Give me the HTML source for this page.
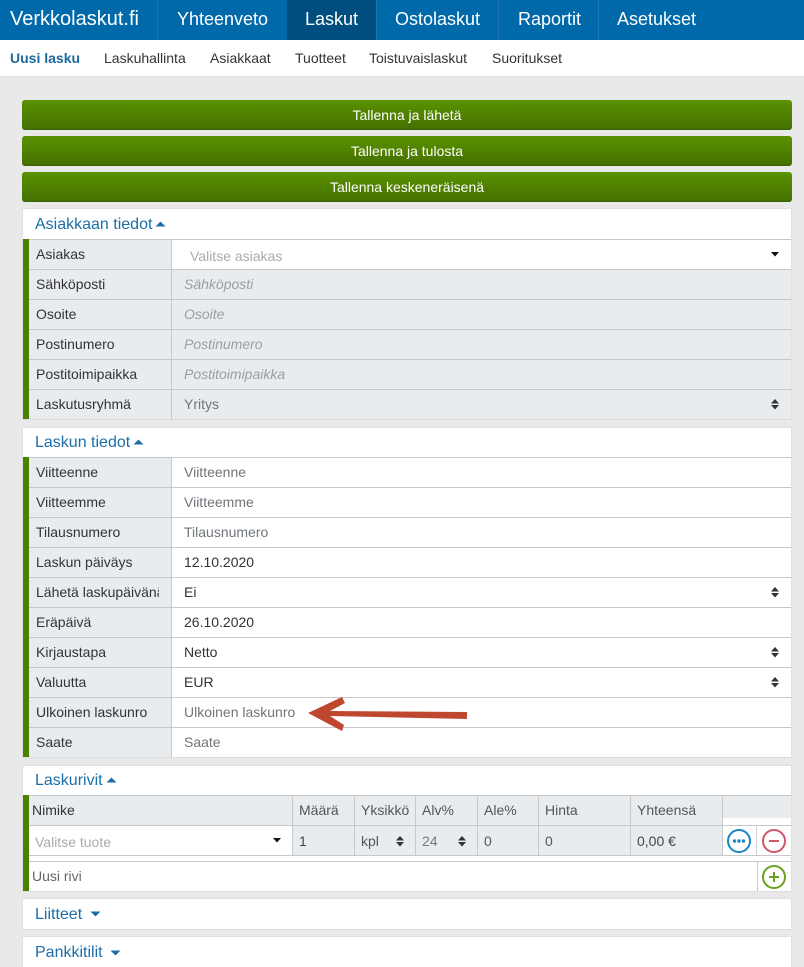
<!DOCTYPE html>
<html lang="fi"><head><meta charset="utf-8"><title>Verkkolaskut.fi</title>
<style>
html,body{margin:0;padding:0;width:804px;height:967px;overflow:hidden}
body{background:#e9e9e9;position:relative;font-family:"Liberation Sans",sans-serif;font-size:14px;color:#333}
div,span,a{position:absolute;box-sizing:border-box;white-space:nowrap}
.nav{left:0;top:0;width:804px;height:40px;background:#0069aa}
.sep{top:0;width:1px;height:40px;background:#1c76b0}
.n{top:8px;font-size:18px;line-height:22px;color:#fff}
.s{top:50px;line-height:16px;font-size:14px;color:#333}
.btn{left:22px;width:770px;height:30px;border-radius:3px;background:linear-gradient(#5a9200,#4f8000 55%,#457000);border-bottom:1px solid #3c6200;color:#fff;text-align:center;line-height:31px;font-size:14px}
.panel{left:22px;width:770px;background:#fff;border:1px solid #e0e0e0;border-bottom-color:#dcdcdc}
.h{left:35px;font-size:16px;line-height:20px;color:#1b6ea8}
.bar{left:23px;width:6px;background:#4a8200}
.lab{left:29px;width:143px;height:30px;background:#e9ecef;border-top:1px solid #c6c8ca;border-right:1px solid #c6c8ca;line-height:29px;padding-left:7px;overflow:hidden;color:#333}
.val{left:172px;width:619px;height:30px;border-top:1px solid #c6c8ca;line-height:29px;padding-left:12px;color:#6f757a;background:#fff}
.g{background:#e9ecef}
.i{font-style:italic;color:#9a9ea2}
.d{color:#333}
.ud{left:771px;width:8px;height:11px}
.th{top:795px;height:30px;background:#e9ecef;border-top:1px solid #c6c8ca;border-right:1px solid #c6c8ca;line-height:29px;padding-left:6px;color:#555}
.td{top:825px;height:31px;background:#e9ecef;border-top:1px solid #c6c8ca;border-right:1px solid #c6c8ca;border-bottom:1px solid #c6c8ca;line-height:30px;padding-left:6px;color:#555}
</style></head><body>
<div class="nav"></div>
<div class="sep" style="left:157px"></div>
<div style="left:287px;top:0;width:89px;height:40px;background:#004d7f"></div>
<div class="sep" style="left:376px"></div>
<div class="sep" style="left:498px"></div>
<div class="sep" style="left:598px"></div>
<span class="n" style="left:10px;font-size:20px;top:8px">Verkkolaskut.fi</span>
<span class="n" style="left:177px">Yhteenveto</span>
<span class="n" style="left:305px">Laskut</span>
<span class="n" style="left:395px">Ostolaskut</span>
<span class="n" style="left:518px">Raportit</span>
<span class="n" style="left:617px">Asetukset</span>

<div style="left:0;top:40px;width:804px;height:37px;background:#fff;border-bottom:1px solid #e0e0e0"></div>
<span class="s" style="left:10px;font-weight:bold;color:#1c6a9c">Uusi lasku</span>
<span class="s" style="left:104px">Laskuhallinta</span>
<span class="s" style="left:210px">Asiakkaat</span>
<span class="s" style="left:295px">Tuotteet</span>
<span class="s" style="left:369px">Toistuvaislaskut</span>
<span class="s" style="left:492px">Suoritukset</span>

<div class="btn" style="top:100px">Tallenna ja lähetä</div>
<div class="btn" style="top:136px">Tallenna ja tulosta</div>
<div class="btn" style="top:172px">Tallenna keskeneräisenä</div>

<!-- Panel 1 -->
<div class="panel" style="top:208px;height:212px"></div>
<span class="h" style="top:215px">Asiakkaan tiedot</span>
<svg style="position:absolute;left:155px;top:221px" width="11" height="6"><path d="M0.500 5.500L5.500 0.500L10.500 5.500Z" fill="#1b6ea8"/></svg>
<div class="bar" style="top:239px;height:180px"></div>
<div class="lab" style="top:239px">Asiakas</div>
<div class="val" style="top:239px;padding-left:18px;color:#a8acaf;line-height:33px">Valitse asiakas</div>
<svg style="position:absolute;left:771px;top:252px" width="8" height="5"><path d="M0 0H8L4 4.500Z" fill="#111"/></svg>
<div class="lab" style="top:269px">Sähköposti</div><div class="val g i" style="top:269px">Sähköposti</div>
<div class="lab" style="top:299px">Osoite</div><div class="val g i" style="top:299px">Osoite</div>
<div class="lab" style="top:329px">Postinumero</div><div class="val g i" style="top:329px">Postinumero</div>
<div class="lab" style="top:359px">Postitoimipaikka</div><div class="val g i" style="top:359px">Postitoimipaikka</div>
<div class="lab" style="top:389px">Laskutusryhmä</div><div class="val g" style="top:389px">Yritys</div>
<svg class="ud" style="position:absolute;top:399px" width="8" height="11"><path d="M0 4.500L4 0L8 4.500ZM0 6H8L4 10.500Z" fill="#333"/></svg>

<!-- Panel 2 -->
<div class="panel" style="top:427px;height:331px"></div>
<span class="h" style="top:433px">Laskun tiedot</span>
<svg style="position:absolute;left:133px;top:439px" width="11" height="6"><path d="M0.500 5.500L5.500 0.500L10.500 5.500Z" fill="#1b6ea8"/></svg>
<div class="bar" style="top:457px;height:300px"></div>
<div class="lab" style="top:457px">Viitteenne</div><div class="val" style="top:457px">Viitteenne</div>
<div class="lab" style="top:487px">Viitteemme</div><div class="val" style="top:487px">Viitteemme</div>
<div class="lab" style="top:517px">Tilausnumero</div><div class="val" style="top:517px">Tilausnumero</div>
<div class="lab" style="top:547px">Laskun päiväys</div><div class="val d" style="top:547px">12.10.2020</div>
<div class="lab" style="top:577px"><span style="left:7px;top:0;width:152px;overflow:hidden;display:block;clip-path:inset(0 29px 0 0)">Lähetä laskupäivänä</span></div><div class="val d" style="top:577px">Ei</div>
<svg class="ud" style="position:absolute;top:587px" width="8" height="11"><path d="M0 4.500L4 0L8 4.500ZM0 6H8L4 10.500Z" fill="#333"/></svg>
<div class="lab" style="top:607px">Eräpäivä</div><div class="val d" style="top:607px">26.10.2020</div>
<div class="lab" style="top:637px">Kirjaustapa</div><div class="val d" style="top:637px">Netto</div>
<svg class="ud" style="position:absolute;top:647px" width="8" height="11"><path d="M0 4.500L4 0L8 4.500ZM0 6H8L4 10.500Z" fill="#333"/></svg>
<div class="lab" style="top:667px">Valuutta</div><div class="val d" style="top:667px">EUR</div>
<svg class="ud" style="position:absolute;top:677px" width="8" height="11"><path d="M0 4.500L4 0L8 4.500ZM0 6H8L4 10.500Z" fill="#333"/></svg>
<div class="lab" style="top:697px">Ulkoinen laskunro</div><div class="val" style="top:697px">Ulkoinen laskunro</div>
<div class="lab" style="top:727px">Saate</div><div class="val" style="top:727px">Saate</div>
<svg style="position:absolute;left:0;top:0" width="804" height="967"><path d="M308 713L342 697L345 703L330 711L467 712V719L330 716L344 725L342 731Z" fill="#c0472f"/></svg>

<!-- Panel 3 -->
<div class="panel" style="top:765px;height:127px"></div>
<span class="h" style="top:771px">Laskurivit</span>
<svg style="position:absolute;left:106px;top:777px" width="11" height="6"><path d="M0.500 5.500L5.500 0.500L10.500 5.500Z" fill="#1b6ea8"/></svg>
<div class="bar" style="top:795px;height:96px"></div>
<div class="th" style="left:29px;width:264px;padding-left:3px;color:#333">Nimike</div>
<div class="th" style="left:293px;width:62px">Määrä</div>
<div class="th" style="left:355px;width:61px">Yksikkö</div>
<div class="th" style="left:416px;width:62px">Alv%</div>
<div class="th" style="left:478px;width:61px">Ale%</div>
<div class="th" style="left:539px;width:92px">Hinta</div>
<div class="th" style="left:631px;width:92px">Yhteensä</div>
<div style="left:723px;top:795px;width:68px;height:23px;background:#e9ecef;border-top:1px solid #c6c8ca"></div>
<div style="left:29px;top:825px;width:264px;height:31px;background:#fff;border-top:1px solid #c6c8ca;border-bottom:1px solid #c6c8ca;border-right:1px solid #c6c8ca;line-height:32px;padding-left:6px;color:#a8acaf">Valitse tuote</div>
<svg style="position:absolute;left:273px;top:838px" width="8" height="5"><path d="M0 0H8L4 4.500Z" fill="#111"/></svg>
<div class="td" style="left:293px;width:62px;color:#444">1</div>
<div class="td" style="left:355px;width:61px">kpl</div>
<svg style="position:absolute;left:396px;top:836px" width="8" height="11"><path d="M0 4.500L4 0L8 4.500ZM0 6H8L4 10.500Z" fill="#333"/></svg>
<div class="td" style="left:416px;width:62px;color:#777">24</div>
<svg style="position:absolute;left:458px;top:836px" width="8" height="11"><path d="M0 4.500L4 0L8 4.500ZM0 6H8L4 10.500Z" fill="#333"/></svg>
<div class="td" style="left:478px;width:61px">0</div>
<div class="td" style="left:539px;width:92px">0</div>
<div class="td" style="left:631px;width:92px;color:#444">0,00 €</div>
<div style="left:723px;top:825px;width:68px;height:31px;background:#fff;border-top:1px solid #c6c8ca;border-bottom:1px solid #c6c8ca"></div>
<div style="left:756px;top:825px;width:1px;height:31px;background:#d0d2d4"></div>
<svg style="position:absolute;left:726px;top:828px" width="26" height="26"><circle cx="13" cy="13" r="11" fill="none" stroke="#1a85c8" stroke-width="2"/><circle cx="8.500" cy="13" r="1.700" fill="#1a85c8"/><circle cx="13" cy="13" r="1.700" fill="#1a85c8"/><circle cx="17.500" cy="13" r="1.700" fill="#1a85c8"/></svg>
<svg style="position:absolute;left:761px;top:828px" width="26" height="26"><circle cx="13" cy="13" r="11" fill="none" stroke="#d0566a" stroke-width="2"/><path d="M8 13H18" stroke="#d0566a" stroke-width="2"/></svg>
<div style="left:29px;top:861px;width:762px;height:31px;background:#fff;border-top:1px solid #c6c8ca;border-bottom:1px solid #dcdcdc;line-height:29px;padding-left:3px;color:#666">Uusi rivi</div>
<div style="left:757px;top:862px;width:1px;height:29px;background:#c6c8ca"></div>
<svg style="position:absolute;left:761px;top:864px" width="26" height="26"><circle cx="13" cy="13" r="11" fill="none" stroke="#68a31c" stroke-width="2"/><path d="M8 13H18M13 8V18" stroke="#68a31c" stroke-width="2"/></svg>

<!-- Collapsed -->
<div class="panel" style="top:898px;height:32px"></div>
<span class="h" style="top:905px">Liitteet</span>
<svg style="position:absolute;left:90px;top:911px" width="11" height="6"><path d="M0.500 0.500H10.500L5.500 5.500Z" fill="#1b6ea8"/></svg>
<div class="panel" style="top:936px;height:31px;border-bottom:none"></div>
<span class="h" style="top:943px">Pankkitilit</span>
<svg style="position:absolute;left:110px;top:950px" width="11" height="6"><path d="M0.500 0.500H10.500L5.500 5.500Z" fill="#1b6ea8"/></svg>
</body></html>
